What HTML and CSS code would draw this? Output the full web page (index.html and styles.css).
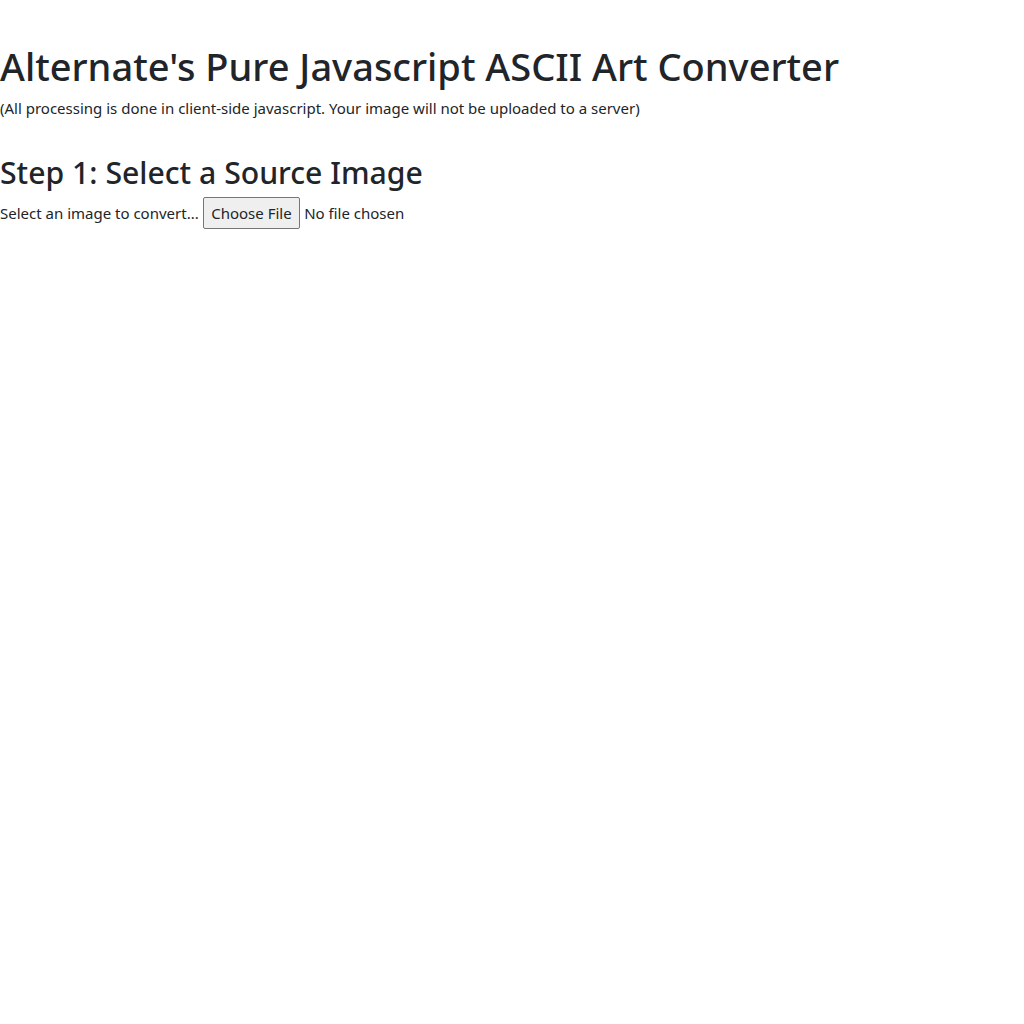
FILE: index.html
```html
<!DOCTYPE html>
<html lang="en">
<head>
<meta charset="utf-8">
<title>Alternate's Pure Javascript ASCII Art Converter</title>
<link rel="stylesheet" href="styles.css">
</head>
<body>
<main class="page">
  <h1 class="title">Alternate's Pure Javascript ASCII Art Converter</h1>
  <p class="note">(All processing is done in client-side javascript. Your image will not be uploaded to a server)</p>
  <h2 class="step">Step 1: Select a Source Image</h2>
  <div class="picker">
    <span class="label">Select an image to convert...</span>
    <input class="file" type="file" accept="image/*">
  </div>
</main>
</body>
</html>
```

FILE: styles.css
```css
html, body {
  margin: 0;
  padding: 0;
  background: #fff;
}
body {
  font-family: "Noto Sans", "Open Sans", sans-serif;
  font-size: 15px;
  line-height: 24px;
  color: #212529;
}
.page {
  padding-top: 42px;
}
.title {
  margin: 0 0 6px;
  font-size: 38px;
  font-weight: 500;
  line-height: 48px;
}
.note {
  margin: 0 0 34px;
}
.step {
  margin: 0 0 5px;
  font-size: 30.2px;
  font-weight: 500;
  line-height: 38px;
}
.picker {
  display: flex;
  align-items: center;
  gap: 4px;
}
.file {
  font: inherit;
  color: #212529;
}
.file::file-selector-button {
  font: inherit;
  color: #212529;
  background: #efefef;
  border: 1px solid #767676;
  border-radius: 2px;
  padding: 3px 7.5px;
  margin-right: 4px;
}
```
